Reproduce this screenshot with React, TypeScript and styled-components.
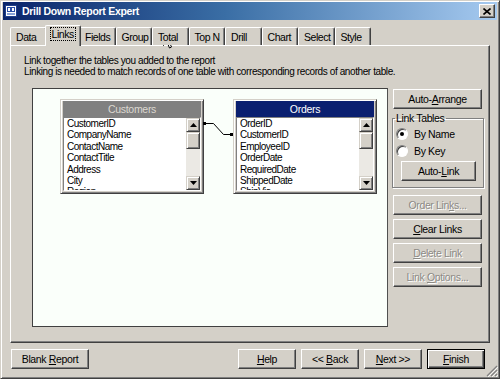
import styled, { createGlobalStyle } from "styled-components";

const GlobalStyle = createGlobalStyle`
  html, body {
    margin: 0;
    padding: 0;
    background: #d4d0c8;
  }
  body {
    font-family: "Liberation Sans", Arial, sans-serif;
    font-size: 11px;
    color: #000;
  }
  * {
    box-sizing: border-box;
  }
`;

const Window = styled.div`
  position: relative;
  width: 500px;
  height: 379px;
  background: #d4d0c8;
  border: 1px solid;
  border-color: #d4d0c8 #404040 #404040 #d4d0c8;
  box-shadow: inset 1px 1px #fff, inset -1px -1px #808080;
  padding: 1px 2px 2px 2px;
  display: flex;
  flex-direction: column;
`;

const TitleBar = styled.div`
  height: 18px;
  display: flex;
  align-items: center;
  gap: 5px;
  padding: 0 2px 0 2px;
  background: linear-gradient(to right, #0a246a 0%, #3a6ea5 45%, #a6caf0 100%);
  color: #fff;
  font-weight: bold;
  font-size: 10.5px;
  letter-spacing: -0.3px;
`;

const TitleText = styled.span`
  flex: 1;
`;

const CloseButton = styled.div`
  width: 16px;
  height: 14px;
  background: #d4d0c8;
  border: 1px solid;
  border-color: #fff #404040 #404040 #fff;
  box-shadow: inset -1px -1px #808080;
  display: flex;
  align-items: center;
  justify-content: center;
`;

const Body = styled.div`
  flex: 1;
  display: flex;
  flex-direction: column;
  padding: 5px 8px 0 7px;
`;

const TabStrip = styled.div`
  display: flex;
  height: 20px;
  align-items: flex-end;
  position: relative;
  z-index: 1;
`;

const Tab = styled.div<{ $active?: boolean }>`
  width: 36.5px;
  height: ${({ $active }) => ($active ? "21px" : "18px")};
  margin: ${({ $active }) => ($active ? "0 -2px -1px -2px" : "0")};
  padding: ${({ $active }) => ($active ? "2px 0 0 5px" : "3px 0 0 5px")};
  background: #d4d0c8;
  border-top: 1px solid #fff;
  border-left: 1px solid #fff;
  border-right: 1px solid #404040;
  border-top-left-radius: 2px;
  border-top-right-radius: 2px;
  box-shadow: inset -1px 0 #808080;
  font-size: 10.5px;
  letter-spacing: -0.45px;
  white-space: nowrap;
  position: relative;
  z-index: ${({ $active }) => ($active ? 2 : 0)};
`;

const Focus = styled.span`
  outline: 1px dotted #000;
  outline-offset: 0px;
  padding: 0 1px;
`;

const Panel = styled.div`
  height: 298px;
  width: 480px;
  border: 1px solid;
  border-color: #fff #404040 #404040 #fff;
  box-shadow: inset -1px -1px #808080;
  padding: 9px 0 0 12px;
  display: flex;
  flex-direction: column;
`;

const Intro = styled.div`
  font-size: 10px;
  line-height: 11px;
  letter-spacing: -0.4px;
  padding-left: 1px;
`;

const ContentRow = styled.div`
  display: flex;
  gap: 4px;
  margin-top: 11px;
  padding-left: 9px;
`;

const Canvas = styled.div`
  position: relative;
  width: 356px;
  height: 239px;
  background: #fafffa;
  border: 1px solid;
  border-color: #404040 #505050 #404040 #404040;
`;

const TableFrame = styled.div<{ $left: number }>`
  position: absolute;
  left: ${({ $left }) => $left}px;
  top: 10px;
  width: 144px;
  height: 95px;
  background: #d4d0c8;
  border: 1px solid;
  border-color: #d4d0c8 #404040 #404040 #d4d0c8;
  box-shadow: inset 1px 1px #fff, inset -1px -1px #808080;
  padding: 1px 2px 2px 2px;
  display: flex;
  flex-direction: column;
`;

const TableHeader = styled.div<{ $active?: boolean }>`
  height: 16px;
  background: ${({ $active }) => ($active ? "#0a1f70" : "#808080")};
  color: ${({ $active }) => ($active ? "#fff" : "#dcd8d0")};
  font-size: 10.5px;
  letter-spacing: -0.3px;
  display: flex;
  align-items: center;
  justify-content: center;
`;

const ListBox = styled.div`
  flex: 1;
  display: flex;
  background: #fff;
  border: 1px solid;
  border-color: #808080 #fff #fff #808080;
  overflow: hidden;
`;

const Items = styled.div`
  flex: 1;
  padding: 0 0 0 3px;
  overflow: hidden;
`;

const Item = styled.div`
  height: 11.4px;
  line-height: 11.4px;
  font-size: 10px;
  letter-spacing: -0.5px;
  white-space: nowrap;
`;

const ScrollBar = styled.div`
  width: 14px;
  display: flex;
  flex-direction: column;
  background: #ebe9e4;
`;

const ScrollBtn = styled.div<{ $h?: number }>`
  width: 14px;
  height: ${({ $h }) => $h ?? 14}px;
  background: #d4d0c8;
  border: 1px solid;
  border-color: #d4d0c8 #404040 #404040 #d4d0c8;
  box-shadow: inset 1px 1px #fff, inset -1px -1px #808080;
  display: flex;
  align-items: center;
  justify-content: center;
`;

const Track = styled.div`
  flex: 1;
`;

const LinkLine = styled.svg`
  position: absolute;
  left: 0;
  top: 0;
  pointer-events: none;
`;

const SideColumn = styled.div`
  width: 92px;
  display: flex;
  flex-direction: column;
  gap: 4px;
  padding-top: 1px;
`;

const Button = styled.div<{ $width?: number; $disabled?: boolean; $default?: boolean }>`
  width: ${({ $width }) => ($width ? `${$width}px` : "89px")};
  height: 20px;
  margin-left: 1px;
  background: #d4d0c8;
  border: 1px solid;
  border-color: ${({ $default }) => ($default ? "#000" : "#fff #404040 #404040 #fff")};
  box-shadow: ${({ $default }) =>
    $default
      ? "inset 1px 1px #fff, inset -1px -1px #404040, inset -2px -2px #808080"
      : "inset -1px -1px #808080"};
  display: flex;
  align-items: center;
  justify-content: center;
  font-size: 10.5px;
  letter-spacing: -0.35px;
  white-space: nowrap;
  color: ${({ $disabled }) => ($disabled ? "#8c8a85" : "#000")};
  text-shadow: ${({ $disabled }) => ($disabled ? "1px 1px #fff" : "none")};
`;

const Label = styled.span`
  white-space: pre;
`;

const GroupBox = styled.fieldset`
  margin: 0 0 3px 0;
  width: 92px;
  height: 75px;
  padding: 2px 0 0 3px;
  border: 1px solid #808080;
  box-shadow: inset 1px 1px #fff, 1px 1px #fff;
  display: flex;
  flex-direction: column;
`;

const Legend = styled.legend`
  padding: 0 1px;
  margin-left: -1px;
  font-size: 10.5px;
  letter-spacing: -0.35px;
  line-height: 10px;
`;

const RadioRow = styled.div`
  display: flex;
  align-items: center;
  gap: 6px;
  height: 17px;
  font-size: 10.5px;
  letter-spacing: -0.35px;
`;

const RadioCircle = styled.span<{ $checked?: boolean }>`
  width: 12px;
  height: 12px;
  border-radius: 50%;
  background: #fff;
  border: 1px solid;
  border-color: #808080 #fff #fff #808080;
  box-shadow: inset 1px 1px #404040;
  display: flex;
  align-items: center;
  justify-content: center;

  &::after {
    content: "";
    width: 4px;
    height: 4px;
    border-radius: 50%;
    background: ${({ $checked }) => ($checked ? "#000" : "transparent")};
  }
`;

const GroupButtonRow = styled.div`
  margin-top: 2px;
  padding-left: 4px;
`;

const Footer = styled.div`
  display: flex;
  align-items: center;
  margin-top: 6px;
  padding-right: 4px;
`;

const Spacer = styled.div`
  flex: 1;
`;

const FooterGroup = styled.div`
  display: flex;
  gap: 4px;
`;

const Cursor = styled.svg`
  position: absolute;
  left: 162px;
  top: 29px;
`;

const Grip = styled.svg`
  position: absolute;
  right: 1px;
  bottom: 1px;
`;

const U = styled.span`
  text-decoration: underline;
`;

const customers = ["CustomerID", "CompanyName", "ContactName", "ContactTitle", "Address", "City", "Region"];
const orders = ["OrderID", "CustomerID", "EmployeeID", "OrderDate", "RequiredDate", "ShippedDate", "ShipVia"];
const tabs = ["Data", "Links", "Fields", "Group", "Total", "Top N", "Drill", "Chart", "Select", "Style"];

const UpArrow = () => (
  <svg width="7" height="4" viewBox="0 0 7 4">
    <path d="M3.5 0 L7 4 L0 4 Z" fill="#000" />
  </svg>
);

const DownArrow = () => (
  <svg width="7" height="4" viewBox="0 0 7 4">
    <path d="M0 0 L7 0 L3.5 4 Z" fill="#000" />
  </svg>
);

const Table = ({ title, fields, left, active }: { title: string; fields: string[]; left: number; active?: boolean }) => (
  <TableFrame $left={left}>
    <TableHeader $active={active}>{title}</TableHeader>
    <ListBox>
      <Items>
        {fields.map((f) => (
          <Item key={f}>{f}</Item>
        ))}
      </Items>
      <ScrollBar>
        <ScrollBtn>
          <UpArrow />
        </ScrollBtn>
        <ScrollBtn $h={17} />
        <Track />
        <ScrollBtn>
          <DownArrow />
        </ScrollBtn>
      </ScrollBar>
    </ListBox>
  </TableFrame>
);

const App = () => {
  return (
    <>
      <GlobalStyle />
      <Window>
        <TitleBar>
          <svg width="12" height="12" viewBox="0 0 12 12">
            <rect x="0.5" y="0.5" width="11" height="11" fill="#fff" stroke="#1d3d8c" />
            <rect x="2" y="2" width="8" height="5" fill="#2a4fa8" />
            <rect x="3" y="3" width="2" height="3" fill="#fff" />
            <rect x="7" y="3" width="2" height="3" fill="#fff" />
            <rect x="2" y="8" width="8" height="2" fill="#8aa4d8" />
          </svg>
          <TitleText>Drill Down Report Expert</TitleText>
          <CloseButton>
            <svg width="8" height="7" viewBox="0 0 8 7">
              <path d="M0.5 0.5 L7.5 6.5 M7.5 0.5 L0.5 6.5" stroke="#000" strokeWidth="1.6" />
            </svg>
          </CloseButton>
        </TitleBar>
        <Body>
          <TabStrip>
            {tabs.map((t) => (
              <Tab key={t} $active={t === "Links"}>
                {t === "Links" ? <Focus>{t}</Focus> : t}
              </Tab>
            ))}
          </TabStrip>
          <Panel>
            <Intro>
              Link together the tables you added to the report
              <br />
              Linking is needed to match records of one table with corresponding records of another table.
            </Intro>
            <ContentRow>
              <Canvas>
                <Table title="Customers" fields={customers} left={27} />
                <Table title="Orders" fields={orders} left={200} active />
                <LinkLine width="356" height="239">
                  <path d="M171.5 34.5 H180.5 L190.5 45.5 H199.5" fill="none" stroke="#000" strokeWidth="1" />
                  <rect x="170" y="33" width="3" height="3" fill="#000" />
                  <rect x="197" y="44" width="3" height="3" fill="#000" />
                </LinkLine>
              </Canvas>
              <SideColumn>
                <Button>
                  <Label>
                    Auto-<U>A</U>rrange
                  </Label>
                </Button>
                <GroupBox>
                  <Legend>Link Tables</Legend>
                  <RadioRow>
                    <RadioCircle $checked />
                    By Name
                  </RadioRow>
                  <RadioRow>
                    <RadioCircle />
                    By Key
                  </RadioRow>
                  <GroupButtonRow>
                    <Button $width={75}>
                      <Label>
                        Auto-<U>L</U>ink
                      </Label>
                    </Button>
                  </GroupButtonRow>
                </GroupBox>
                <Button $disabled>
                  <Label>
                    Order Lin<U>k</U>s...
                  </Label>
                </Button>
                <Button>
                  <Label>
                    <U>C</U>lear Links
                  </Label>
                </Button>
                <Button $disabled>
                  <Label>
                    <U>D</U>elete Link
                  </Label>
                </Button>
                <Button $disabled>
                  <Label>
                    {"Link "}
                    <U>O</U>ptions...
                  </Label>
                </Button>
              </SideColumn>
            </ContentRow>
          </Panel>
          <Footer>
            <Button $width={78}>
              <Label>
                {"Blank "}
                <U>R</U>eport
              </Label>
            </Button>
            <Spacer />
            <FooterGroup>
              <Button $width={58}>
                <Label>
                  <U>H</U>elp
                </Label>
              </Button>
              <Button $width={58}>
                <Label>
                  {"<< "}
                  <U>B</U>ack
                </Label>
              </Button>
              <Button $width={58}>
                <Label>
                  <U>N</U>ext &gt;&gt;
                </Label>
              </Button>
              <Button $width={58} $default>
                <Label>
                  <U>F</U>inish
                </Label>
              </Button>
            </FooterGroup>
          </Footer>
        </Body>
        <Cursor width="12" height="19" viewBox="0 0 12 19">
          <path d="M0.5 0.5 V15.5 L4 12 L6.5 18 L8.5 17 L6 11.5 H11 Z" fill="#fff" stroke="#000" strokeWidth="1" />
        </Cursor>
        <Grip width="12" height="12" viewBox="0 0 12 12">
          <path d="M11 1 L1 11 M11 5 L5 11 M11 9 L9 11" stroke="#808080" strokeWidth="1.2" />
          <path d="M12 2 L2 12 M12 6 L6 12 M12 10 L10 12" stroke="#fff" strokeWidth="0.8" />
        </Grip>
      </Window>
    </>
  );
};

export default App;
